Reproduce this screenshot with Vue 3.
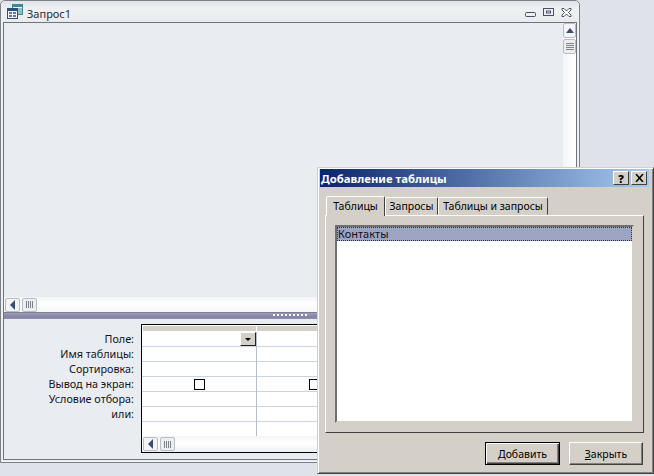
<script setup>
const labels = ['Поле:', 'Имя таблицы:', 'Сортировка:', 'Вывод на экран:', 'Условие отбора:', 'или:']
const rows = [0, 1, 2, 3, 4, 5, 6]
</script>

<template>
  <div class="desk">
    <div class="win">
      <div class="title">
        <svg class="ticon" width="16" height="15" viewBox="0 0 16 15">
          <rect x="5.500" y="0.500" width="10" height="10" fill="#eaf3f5" stroke="#3d8a94"/>
          <rect x="5.500" y="0.500" width="10" height="2.500" fill="#3d8a94"/>
          <path d="M11 5h4M11 7h4M11 9h4" stroke="#3d8a94"/>
          <rect x="0.500" y="4.500" width="10" height="10" fill="#f4f6fa" stroke="#2f4f86"/>
          <rect x="0.500" y="4.500" width="10" height="2.500" fill="#2f4f86"/>
          <path d="M2 9h3M6 9h3M2 12h3M6 12h3" stroke="#2f4f86" stroke-width="1.400"/>
        </svg>
        <span class="ttext">Запрос1</span>
        <div class="wbtns">
          <svg width="11" height="6" viewBox="0 0 11 6" class="b1"><rect x="0.500" y="0.500" width="10" height="4" rx="1" fill="none" stroke="#4a4f66"/></svg>
          <svg width="11" height="9" viewBox="0 0 11 9" class="b2"><rect x="0.500" y="0.500" width="10" height="7" fill="none" stroke="#4a4f66"/><rect x="3.500" y="3" width="4" height="2" fill="none" stroke="#4a4f66"/></svg>
          <svg width="11" height="9" viewBox="0 0 11 9" class="b3"><path d="M1 0.500h2l2.500 2.500 2.500-2.500h2v1.500L7.500 4.500 10 7v1.500H8L5.500 6 3 8.500H1V7l2.500-2.500L1 2z" fill="#fff" stroke="#4a4f66"/></svg>
        </div>
      </div>
      <div class="inner">
        <div class="upper">
          <div class="canvas">
            <div class="vbar">
              <div class="sbtn vb"><i class="up"></i></div>
              <div class="sthumb-v"><i></i><i></i><i></i><i></i></div>
            </div>
          </div>
          <div class="hbar">
            <div class="sbtn hb"><i class="left"></i></div>
            <div class="sthumb-h"><i></i><i></i><i></i><i></i></div>
          </div>
        </div>
        <div class="split"><span class="dots"></span></div>
        <div class="lower">
          <div class="labels">
            <div v-for="l in labels" :key="l" class="lab">{{ l }}</div>
          </div>
          <div class="grid">
            <div class="heads"><div class="hd h1"></div><div class="hd h2"></div></div>
            <div class="cols">
              <div class="col c1">
                <div v-for="r in rows" :key="r" class="cell">
                  <div v-if="r === 0" class="combo"><i></i></div>
                  <div v-if="r === 3" class="chk"></div>
                </div>
              </div>
              <div class="col c2">
                <div v-for="r in rows" :key="r" class="cell">
                  <div v-if="r === 3" class="chk"></div>
                </div>
              </div>
            </div>
            <div class="gbar">
              <div class="sbtn hb"><i class="left"></i></div>
              <div class="sthumb-h"><i></i><i></i><i></i><i></i></div>
            </div>
          </div>
        </div>
      </div>
    </div>

    <div class="dlg">
      <div class="dtitle">
        <span>Добавление таблицы</span>
        <div class="cap"><b>?</b></div>
        <div class="cap"><svg width="9" height="8" viewBox="0 0 9 8"><path d="M1 0l7 8M8 0L1 8" fill="none" stroke="#000" stroke-width="1.500"/></svg></div>
      </div>
      <div class="tabs">
        <div class="tab on">Таблицы</div>
        <div class="tab t2">Запросы</div>
        <div class="tab t3">Таблицы и запросы</div>
      </div>
      <div class="panel">
        <div class="list"><div class="sel">Контакты</div></div>
      </div>
      <div class="foot">
        <button class="btn def"><span><u>Д</u>обавить</span></button>
        <button class="btn"><span><u>З</u>акрыть</span></button>
      </div>
    </div>
  </div>
</template>

<style scoped>
.desk { position: relative; width: 654px; height: 476px; overflow: hidden; background: #dfe2e8; font-family: "Noto Sans", "DejaVu Sans", sans-serif; font-size: 11px; color: #111; }
.win { position: absolute; left: 0; top: 0; width: 580px; height: 463px; box-sizing: border-box; border: 1px solid #7b8087; border-radius: 5px 5px 0 0; background: #eef0f3; display: flex; flex-direction: column; padding: 0 2px 2px; }
.title { height: 21px; flex: none; display: flex; align-items: center; background: linear-gradient(#dfe2e7, #eef0f2 40%, #e9ebee); position: relative; }
.ticon { margin-left: 4px; }
.ttext { margin-left: 4px; margin-top: 4px; font-size: 11px; color: #2a2f3a; }
.wbtns { margin-left: auto; display: flex; align-items: center; gap: 7px; margin-right: 5px; margin-top: 2px; }
.b1 { margin-top: 5px; }
.inner { flex: 1; border: 1px solid #6f747c; background: #e9ecf0; display: flex; flex-direction: column; min-height: 0; }
.upper { height: 289px; flex: none; display: flex; flex-direction: column; }
.canvas { flex: 1; background: #e9ecf0; display: flex; justify-content: flex-end; min-height: 0; }
.vbar { width: 13px; background: linear-gradient(90deg, #f4f5f6, #fff); }
.sbtn { box-sizing: border-box; border: 1px solid #b9bdc3; border-radius: 2px; background: #f3f4f6; display: flex; align-items: center; justify-content: center; flex: none; }
.vb { height: 15px; }
.hb { width: 15px; height: 14px; }
.up { width: 0; height: 0; border: 4px solid transparent; border-top: 0; border-bottom: 5px solid #3c4a78; }
.left { width: 0; height: 0; border: 5px solid transparent; border-left: 0; border-right: 5px solid #3c4a78; }
.sthumb-v { box-sizing: border-box; height: 15px; margin-top: 1px; border: 1px solid #b9bdc3; border-radius: 2px; background: #eceef1; display: flex; flex-direction: column; align-items: center; justify-content: center; gap: 1px; }
.sthumb-v i { width: 8px; height: 1px; background: #7e8288; }
.sthumb-h { box-sizing: border-box; width: 15px; height: 14px; margin-left: 2px; border: 1px solid #b9bdc3; border-radius: 2px; background: #eceef1; display: flex; align-items: center; justify-content: center; gap: 1px; flex: none; }
.sthumb-h i { width: 1px; height: 7px; background: #7e8288; }
.hbar { height: 15px; flex: none; display: flex; align-items: center; padding-left: 1px; background: linear-gradient(#f3f4f6, #fff 45%, #f5f6f8); }
.split { height: 7px; flex: none; border-top: 1px solid #7d8088; box-sizing: border-box; background: linear-gradient(#9c9cbc, #8484a6 60%, #9090b0); position: relative; }
.dots { position: absolute; left: 269px; top: 1px; width: 35px; height: 2px; background: repeating-linear-gradient(90deg, #fff 0 2px, transparent 2px 4px); }
.lower { flex: 1; display: flex; background: #e9ecf0; min-height: 0; }
.labels { width: 130px; margin-top: 12px; margin-right: 7px; flex: none; text-align: right; }
.lab { height: 15px; line-height: 15px; font-size: 10.800px; white-space: nowrap; color: #14141e; }
.grid { margin-top: 5px; width: 400px; height: 129px; flex: none; box-sizing: border-box; border: 1px solid #000; background: #fff; display: flex; flex-direction: column; }
.heads { height: 7px; flex: none; display: flex; padding: 1px 0 0 1px; box-sizing: border-box; gap: 1px; }
.hd { background: #d4d0c8; height: 5px; }
.h1 { width: 113px; }
.h2 { flex: 1; }
.cols { display: flex; flex: none; height: 104px; overflow: hidden; }
.col { box-sizing: border-box; flex: none; }
.c1 { width: 115px; border-right: 1px solid #b8bec8; }
.c2 { width: 114px; }
.cell { height: 15px; box-sizing: border-box; border-bottom: 1px solid #c9d3e3; position: relative; display: flex; justify-content: center; align-items: center; }
.cell:last-child { border-bottom: 0; }
.combo { position: absolute; right: 0; top: 0; box-sizing: border-box; width: 16px; height: 14px; background: #d4d0c8; border: 1px solid; border-color: #fff #222 #222 #fff; display: flex; align-items: center; justify-content: center; }
.combo i { width: 0; height: 0; border: 3px solid transparent; border-bottom: 0; border-top: 3px solid #000; }
.chk { width: 11px; height: 11px; box-sizing: border-box; border: 1px solid #000; background: #fff; }
.gbar { flex: 1; display: flex; align-items: center; padding-left: 1px; background: linear-gradient(#f3f4f6, #fff 45%, #eef0f3); }

.dlg { position: absolute; left: 317px; top: 167px; width: 337px; height: 307px; box-sizing: border-box; background: #d4d0c8; border: 1px solid; border-color: #d4d0c8 #404040 #404040 #d4d0c8; box-shadow: inset 1px 1px 0 #fff, inset -1px -1px 0 #808080; padding: 1px 4px 2px 2px; display: flex; flex-direction: column; font-size: 10.500px; color: #000; }
.dtitle { height: 18px; flex: none; display: flex; align-items: center; gap: 2px; padding-right: 2px; background: linear-gradient(90deg, #0a246a, #a6caf0); color: #fff; font-weight: 700; font-size: 11.300px; }
.dtitle span { flex: 1; padding-left: 1px; }
.cap { box-sizing: border-box; width: 16px; height: 14px; background: #d4d0c8; border: 1px solid; border-color: #fff #404040 #404040 #fff; display: flex; align-items: center; justify-content: center; color: #000; font-size: 11px; }
.tabs { display: flex; align-items: flex-end; height: 27px; flex: none; padding-left: 6px; margin-top: 1px; }
.tab { box-sizing: border-box; height: 18px; line-height: 17px; text-align: center; background: #d4d0c8; border: 1px solid; border-color: #fff #404040 transparent #fff; border-radius: 2px 2px 0 0; white-space: nowrap; }
.tab.on { height: 20px; width: 59px; padding-top: 1px; border-bottom: 0; position: relative; margin-bottom: -1px; z-index: 1; }
.t2 { width: 53px; }
.t3 { width: 110px; }
.panel { margin-left: 5px; width: 319px; height: 218px; flex: none; box-sizing: border-box; border: 1px solid; border-color: #fff #404040 #404040 #fff; padding: 9px; }
.list { height: 198px; box-sizing: border-box; background: #fff; border: 2px solid; border-color: #6f6f6f #d4d0c8 #d4d0c8 #6f6f6f; }
.sel { height: 14px; line-height: 12px; box-sizing: border-box; background: #9da5c2; border: 1px dotted #333; font-size: 11px; color: #111; }
.foot { display: flex; justify-content: flex-end; gap: 9px; padding-top: 9px; padding-right: 6px; }
.btn { box-sizing: border-box; width: 74px; height: 23px; padding: 0; background: #d4d0c8; border: 1px solid; border-color: #fff #404040 #404040 #fff; box-shadow: inset -1px -1px 0 #808080; font: inherit; color: #000; display: flex; align-items: center; justify-content: center; }
.def { width: 75px; border: 1px solid #000; box-shadow: inset 1px 1px 0 #fff, inset -1px -1px 0 #404040, inset -2px -2px 0 #808080; }
</style>
